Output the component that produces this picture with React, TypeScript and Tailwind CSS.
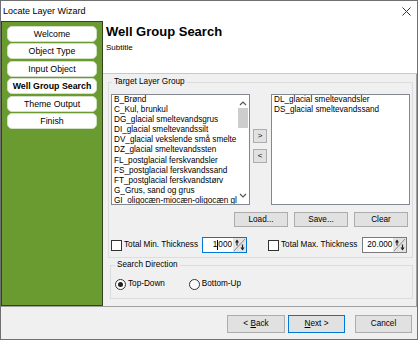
import React from "react";

const leftItems = [
  "B_Brønd",
  "C_Kul, brunkul",
  "DG_glacial smeltevandsgrus",
  "DI_glacial smeltevandssilt",
  "DV_glacial vekslende små smelte",
  "DZ_glacial smeltevandssten",
  "FL_postglacial ferskvandsler",
  "FS_postglacial ferskvandssand",
  "FT_postglacial ferskvandstørv",
  "G_Grus, sand og grus",
  "GI_oligocæn-miocæn-oligocæn gli",
];

const rightItems = ["DL_glacial smeltevandsler", "DS_glacial smeltevandssand"];

const navItems = ["Welcome", "Object Type", "Input Object", "Well Group Search", "Theme Output", "Finish"];

function SpinIcon() {
  return (
    <svg width="13" height="14" viewBox="0 0 13 14" className="shrink-0">
      <rect x="0" y="0" width="13" height="14" fill="#e3e3e3" />
      <line x1="1" y1="13" x2="12" y2="1" stroke="#8a8a8a" strokeWidth="1" />
      <line x1="4" y1="2.5" x2="4" y2="7.5" stroke="#222" strokeWidth="1.2" />
      <polygon points="2,4.5 4,1.5 6,4.5" fill="#222" />
      <line x1="9.5" y1="6.5" x2="9.5" y2="11.5" stroke="#222" strokeWidth="1.2" />
      <polygon points="7.5,9.5 9.5,12.5 11.5,9.5" fill="#222" />
    </svg>
  );
}

function Btn({ children, w, primary }: { children: React.ReactNode; w: string; primary?: boolean }) {
  return (
    <div
      className={`${w} flex items-center justify-center bg-[#e1e1e1] border ${
        primary ? "border-[#0078d7]" : "border-[#adadad]"
      }`}
    >
      {children}
    </div>
  );
}

export default function App() {
  return (
    <div className="w-[418px] h-[340px] bg-[#f0f0f0] border border-[#707070] flex flex-col text-black text-[8.2px] leading-[10px] font-['Liberation_Sans',Arial,sans-serif] overflow-hidden">
      {/* title bar */}
      <div className="h-[20px] bg-white flex items-center justify-between pl-[2px] pr-[6px] shrink-0">
        <span className="text-[9px]">Locate Layer Wizard</span>
        <svg width="9" height="9" viewBox="0 0 9 9">
          <line x1="0.5" y1="0.5" x2="8.5" y2="8.5" stroke="#333" strokeWidth="1" />
          <line x1="8.5" y1="0.5" x2="0.5" y2="8.5" stroke="#333" strokeWidth="1" />
        </svg>
      </div>

      {/* main */}
      <div className="flex h-[285px] shrink-0">
        <div className="w-[102px] shrink-0 bg-[#6a9b31] border border-[#34431f] pl-[5px] pr-[3px] pt-[4px] flex flex-col gap-[1.4px]">
          {navItems.map((n) => (
            <div
              key={n}
              className={`h-[16px] w-[90px] bg-white rounded-[5px] border border-[#d3dfc4] flex items-center justify-center text-[8.8px] ${
                n === "Well Group Search" ? "font-bold" : ""
              }`}
            >
              {n}
            </div>
          ))}
        </div>

        <div className="flex-1 flex flex-col">
          {/* header */}
          <div className="h-[53px] shrink-0 bg-white border-b border-[#c8c8c8] pl-[3px] pt-[3px]">
            <div className="text-[13px] font-bold leading-[16px]">Well Group Search</div>
            <div className="text-[8px] leading-[10px] mt-[3px]">Subtitle</div>
          </div>

          {/* content */}
          <div className="flex-1 border-r border-[#a0a0a0] pl-[5px] pt-[3px] flex flex-col">
            <fieldset className="w-[305px] border border-[#dcdcdc] px-[2px] pb-[4px]">
              <legend className="ml-[1px] px-[2px] leading-[10px]">Target Layer Group</legend>
              <div className="flex mt-[7px]">
                {/* left list */}
                <div className="w-[139px] h-[111px] bg-white border border-[#828790] flex overflow-hidden">
                  <div className="flex-1 pl-[2px] pt-[0px] overflow-hidden whitespace-nowrap">
                    {leftItems.map((t) => (
                      <div key={t} className="leading-[10.1px] h-[10.1px]">
                        {t}
                      </div>
                    ))}
                  </div>
                  <div className="w-[12px] shrink-0 bg-white flex flex-col items-center">
                    <svg width="8" height="6" viewBox="0 0 8 6" className="mt-[5px]">
                      <polyline points="1,5 4,2 7,5" fill="none" stroke="#555" strokeWidth="1.2" />
                    </svg>
                    <div className="w-[10px] h-[20px] bg-[#cdcdcd] mt-[2px]" />
                    <div className="flex-1" />
                    <svg width="8" height="6" viewBox="0 0 8 6" className="mb-[5px]">
                      <polyline points="1,1 4,4 7,1" fill="none" stroke="#555" strokeWidth="1.2" />
                    </svg>
                  </div>
                </div>
                {/* arrows */}
                <div className="w-[14px] ml-[3px] flex flex-col pt-[35px] gap-[6px]">
                  <div className="h-[14px] bg-[#e1e1e1] border border-[#adadad] flex items-center justify-center text-[8px]">
                    &gt;
                  </div>
                  <div className="h-[14px] bg-[#e1e1e1] border border-[#adadad] flex items-center justify-center text-[8px]">
                    &lt;
                  </div>
                </div>
                {/* right list */}
                <div className="w-[139px] h-[111px] ml-[4px] bg-white border border-[#828790] pl-[2px] whitespace-nowrap overflow-hidden">
                  {rightItems.map((t) => (
                    <div key={t} className="leading-[10.1px] h-[10.1px]">
                      {t}
                    </div>
                  ))}
                </div>
              </div>

              <div className="flex justify-end gap-[6px] mt-[7px] pr-[2px] h-[15px]">
                <Btn w="w-[54px]">Load...</Btn>
                <Btn w="w-[54px]">Save...</Btn>
                <Btn w="w-[54px]">Clear</Btn>
              </div>

              <div className="flex items-center mt-[10px] h-[16px]">
                <div className="w-[11px] h-[11px] border border-[#333] bg-white" />
                <span className="ml-[2px]">Total Min. Thickness</span>
                <div className="ml-[4px] w-[45px] h-[16px] bg-white border border-[#0078d7] flex items-center justify-end">
                  <span className="flex items-center pr-[1px]">
                    1<span className="inline-block w-px h-[10px] bg-black" />000
                  </span>
                  <SpinIcon />
                </div>
                <div className="ml-[21px] w-[11px] h-[11px] border border-[#333] bg-white" />
                <span className="ml-[2px]">Total Max. Thickness</span>
                <div className="ml-[5px] w-[45px] h-[16px] bg-white border border-[#7a7a7a] flex items-center justify-end">
                  <span className="pr-[1px]">20.000</span>
                  <SpinIcon />
                </div>
              </div>
            </fieldset>

            <fieldset className="w-[303px] ml-[2px] mt-[2px] border border-[#dcdcdc] pl-[4px] pb-[8px]">
              <legend className="px-[2px] leading-[10px]">Search Direction</legend>
              <div className="flex items-center mt-[8px] h-[12px]">
                <div className="w-[11px] h-[11px] rounded-full border border-[#333] bg-white flex items-center justify-center">
                  <div className="w-[5px] h-[5px] rounded-full bg-[#222]" />
                </div>
                <span className="ml-[2px]">Top-Down</span>
                <div className="ml-[24px] w-[11px] h-[11px] rounded-full border border-[#333] bg-white" />
                <span className="ml-[2px]">Bottom-Up</span>
              </div>
            </fieldset>
          </div>
        </div>
      </div>

      {/* bottom bar */}
      <div className="flex-1 border-t border-[#a0a0a0] flex items-start justify-end pt-[8px] pr-[5px]">
        <div className="flex h-[18px]">
          <Btn w="w-[58px]">
            &lt;&nbsp;<span className="underline">B</span>ack
          </Btn>
          <div className="w-[3px]" />
          <Btn w="w-[57px]" primary>
            <span className="underline">N</span>ext&nbsp;&gt;
          </Btn>
          <div className="w-[10px]" />
          <Btn w="w-[57px]">Cancel</Btn>
        </div>
      </div>
    </div>
  );
}
